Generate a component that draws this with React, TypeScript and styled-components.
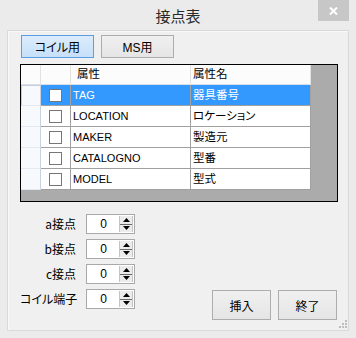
import React from 'react';
import styled, { createGlobalStyle } from 'styled-components';

const Global = createGlobalStyle`
  html, body { margin: 0; padding: 0; background: #ebebeb; }
  body {
    font-family: "Liberation Sans", "Noto Sans CJK JP", sans-serif;
    font-feature-settings: "palt";
    color: #000;
  }
`;

const Window = styled.div`
  width: 356px;
  height: 338px;
  box-sizing: border-box;
  background: #ebebeb;
  display: flex;
  flex-direction: column;
`;

const TitleBar = styled.div`
  height: 30px;
  display: grid;
  grid-template-columns: 1fr auto 1fr;
  align-items: start;
`;

const Title = styled.div`
  grid-column: 2;
  font-family: "Noto Sans CJK JP", sans-serif;
  font-size: 15px;
  line-height: 31px;
  color: #2a2a2a;
`;

const CloseButton = styled.div`
  grid-column: 3;
  justify-self: end;
  margin-right: 7px;
  width: 31px;
  height: 21px;
  background: #c7c7c7;
  display: flex;
  align-items: center;
  justify-content: center;
`;

const Panel = styled.div`
  position: relative;
  margin: 0 7px 7px 7px;
  height: 301px;
  box-sizing: border-box;
  background: #f0f0f0;
  border: 1px solid #dadada;
  box-shadow: inset 1px 1px 0 #f8f8f8;
  padding: 4px 10px 0 12px;
  display: flex;
  flex-direction: column;
`;

const TabRow = styled.div`
  display: flex;
  gap: 7px;
  margin-left: 1px;
`;

const ToggleButton = styled.div<{ $active?: boolean }>`
  width: 73px;
  height: 23px;
  box-sizing: border-box;
  display: flex;
  align-items: center;
  justify-content: center;
  font-size: 12px;
  border: 1px solid ${(p) => (p.$active ? '#5a9fe6' : '#adadad')};
  background: ${(p) =>
    p.$active
      ? 'linear-gradient(#dcecfc, #c6e0f9)'
      : 'linear-gradient(#f0f0f0, #e5e5e5)'};
`;

const GridBox = styled.div`
  margin-top: 6px;
  width: 318px;
  height: 138px;
  box-sizing: border-box;
  border: 1px solid #000;
  background: #ababab;
`;

const Row = styled.div<{ $header?: boolean }>`
  display: grid;
  grid-template-columns: 20px 30px 120px 120px;
  height: ${(p) => (p.$header ? '20px' : '21px')};
  width: 290px;
`;

const RowHead = styled.div<{ $selected?: boolean; $header?: boolean }>`
  box-sizing: border-box;
  background: ${(p) => (p.$header ? '#fcfcfc' : '#f7f9fc')};
  border-right: 1px solid ${(p) => (p.$header ? '#e2e2e2' : '#c9d1dc')};
  border-bottom: 1px solid ${(p) => (p.$header ? '#d8dfe8' : '#e3e9f2')};
  box-shadow: ${(p) => (p.$selected ? 'inset 1px 1px 0 #c5cfdc' : 'none')};
`;

const HeadCell = styled.div<{ $pad: number }>`
  box-sizing: border-box;
  background: #fcfcfc;
  border-right: 1px solid #e2e2e2;
  border-bottom: 1px solid #d8dfe8;
  font-size: 11.5px;
  line-height: 19px;
  padding-left: ${(p) => p.$pad}px;
  white-space: nowrap;
`;

const Cell = styled.div<{ $selected?: boolean; $cjk?: boolean }>`
  box-sizing: border-box;
  background: ${(p) => (p.$selected ? '#3399ff' : '#fff')};
  color: ${(p) => (p.$selected ? '#fff' : '#000')};
  border-right: 1px solid #a0a0a0;
  border-bottom: 1px solid #a0a0a0;
  font-size: ${(p) => (p.$cjk ? '11.5px' : '11px')};
  line-height: 20px;
  padding-left: 2px;
  white-space: nowrap;
`;

const CheckCell = styled(Cell)`
  display: flex;
  align-items: center;
  justify-content: center;
  padding-left: 0;
  padding-right: 1px;
`;

const CheckBox = styled.div`
  width: 13px;
  height: 13px;
  box-sizing: border-box;
  border: 1px solid #767676;
  background: #fff;
`;

const Bottom = styled.div`
  margin-top: 12px;
  display: flex;
  justify-content: space-between;
  align-items: flex-end;
`;

const SpinGroup = styled.div`
  display: flex;
  flex-direction: column;
  gap: 5px;
  margin-bottom: 11px;
`;

const SpinRow = styled.div`
  display: flex;
  align-items: center;
  gap: 10px;
`;

const SpinLabel = styled.div`
  width: 56px;
  text-align: right;
  font-family: "Noto Sans CJK JP", sans-serif;
  font-size: 12px;
  line-height: 20px;
  white-space: nowrap;
`;

const SpinBox = styled.div`
  width: 49px;
  height: 20px;
  box-sizing: border-box;
  border: 1px solid #a9a9a9;
  background: #fff;
  display: flex;
  padding: 1px;
`;

const SpinValue = styled.div`
  flex: 1;
  text-align: center;
  font-size: 12px;
  line-height: 16px;
`;

const SpinButtons = styled.div`
  width: 14px;
  box-sizing: border-box;
  border-left: 1px solid #c4c4c4;
  border-right: 1px solid #c4c4c4;
  background: #ececec;
  display: flex;
  flex-direction: column;
`;

const SpinHalf = styled.div<{ $top?: boolean }>`
  flex: 1;
  display: flex;
  align-items: center;
  justify-content: center;
  border-bottom: ${(p) => (p.$top ? '1px solid #6a6a6a' : 'none')};
`;

const ActionRow = styled.div`
  display: flex;
  gap: 7px;
  margin-right: 1px;
`;

const ActionButton = styled.div`
  width: 59px;
  height: 30px;
  box-sizing: border-box;
  border: 1px solid #adadad;
  background: linear-gradient(#f0f0f0, #e5e5e5);
  display: flex;
  align-items: center;
  justify-content: center;
  font-family: "Noto Sans CJK JP", sans-serif;
  font-size: 12px;
`;

const Grip = styled.svg`
  position: absolute;
  right: 1px;
  bottom: 2px;
`;

const rows = [
  { attr: 'TAG', name: '器具番号' },
  { attr: 'LOCATION', name: 'ロケーション' },
  { attr: 'MAKER', name: '製造元' },
  { attr: 'CATALOGNO', name: '型番' },
  { attr: 'MODEL', name: '型式' },
];

const spins = ['a接点', 'b接点', 'c接点', 'コイル端子'];

const Arrow = ({ up }: { up?: boolean }) => (
  <svg width="7" height="4" viewBox="0 0 7 4">
    {up ? <polygon points="0,4 7,4 3.5,0" fill="#000" /> : <polygon points="0,0 7,0 3.5,4" fill="#000" />}
  </svg>
);

export default function App() {
  return (
    <>
      <Global />
      <Window>
        <TitleBar>
          <Title>接点表</Title>
          <CloseButton>
            <svg width="9" height="8" viewBox="0 0 9 8">
              <path d="M1 0.5 L8 7.5 M8 0.5 L1 7.5" stroke="#fff" strokeWidth="2" />
            </svg>
          </CloseButton>
        </TitleBar>
        <Panel>
          <TabRow>
            <ToggleButton $active>コイル用</ToggleButton>
            <ToggleButton>MS用</ToggleButton>
          </TabRow>
          <GridBox>
            <Row $header>
              <RowHead $header />
              <HeadCell $pad={0} />
              <HeadCell $pad={6}>属性</HeadCell>
              <HeadCell $pad={2}>属性名</HeadCell>
            </Row>
            {rows.map((r, i) => (
              <Row key={r.attr}>
                <RowHead $selected={i === 0} />
                <CheckCell $selected={i === 0}>
                  <CheckBox />
                </CheckCell>
                <Cell $selected={i === 0}>{r.attr}</Cell>
                <Cell $selected={i === 0} $cjk>{r.name}</Cell>
              </Row>
            ))}
          </GridBox>
          <Bottom>
            <SpinGroup>
              {spins.map((s) => (
                <SpinRow key={s}>
                  <SpinLabel>{s}</SpinLabel>
                  <SpinBox>
                    <SpinValue>0</SpinValue>
                    <SpinButtons>
                      <SpinHalf $top>
                        <Arrow up />
                      </SpinHalf>
                      <SpinHalf>
                        <Arrow />
                      </SpinHalf>
                    </SpinButtons>
                  </SpinBox>
                </SpinRow>
              ))}
            </SpinGroup>
            <ActionRow>
              <ActionButton>挿入</ActionButton>
              <ActionButton>終了</ActionButton>
            </ActionRow>
          </Bottom>
          <Grip width="8" height="8" viewBox="0 0 8 8">
            <rect x="6" y="0" width="2" height="2" fill="#bdbdbd" />
            <rect x="3" y="3" width="2" height="2" fill="#bdbdbd" />
            <rect x="6" y="3" width="2" height="2" fill="#bdbdbd" />
            <rect x="0" y="6" width="2" height="2" fill="#bdbdbd" />
            <rect x="3" y="6" width="2" height="2" fill="#bdbdbd" />
            <rect x="6" y="6" width="2" height="2" fill="#bdbdbd" />
          </Grip>
        </Panel>
      </Window>
    </>
  );
}
